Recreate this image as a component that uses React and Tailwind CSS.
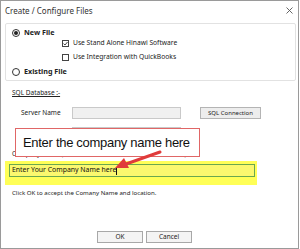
import React from "react";

const ui = { fontFamily: '"Noto Sans", "Open Sans", sans-serif' };

function Radio({ checked }) {
  return (
    <span className="w-[8px] h-[8px] rounded-full border border-[#333] bg-white flex items-center justify-center shrink-0">
      {checked && <span className="w-[4px] h-[4px] rounded-full bg-[#222]" />}
    </span>
  );
}

function Check({ checked }) {
  return (
    <span className="w-[7px] h-[7px] border border-[#444] bg-white flex items-center justify-center shrink-0">
      {checked && (
        <svg width="5" height="5" viewBox="0 0 5 5">
          <path d="M0.5 2.6 L2 4 L4.5 1" fill="none" stroke="#333" strokeWidth="0.9" />
        </svg>
      )}
    </span>
  );
}

export default function App() {
  return (
    <div className="w-[300px] h-[249px] bg-white relative overflow-hidden text-[#222]" style={ui}>
      <div className="w-[299px] h-[249px] border border-[#9a9a9a] flex flex-col bg-white">
        {/* Title bar */}
        <div className="h-[22px] flex items-center justify-between pl-[4px] pr-[5px] pb-[3px]">
          <span className="text-[8px] leading-none text-[#333]">Create / Configure Files</span>
          <svg width="7" height="7" viewBox="0 0 7 7">
            <path d="M0.5 0.5 L6.5 6.5 M6.5 0.5 L0.5 6.5" stroke="#555" strokeWidth="0.9" />
          </svg>
        </div>

        {/* Group box */}
        <div className="ml-[4px] w-[291px] h-[58px] border border-[#e2e2e2] rounded-[2px] pt-[4px] flex flex-col">
          <div className="h-[10px] flex items-center pl-[6px] gap-[4px]">
            <Radio checked />
            <span className="text-[7.2px] font-bold leading-none">New File</span>
          </div>
          <div className="h-[10px] flex items-center pl-[56px] gap-[4px]">
            <Check checked />
            <span className="text-[6.7px] leading-none">Use Stand Alone Hinawi Software</span>
          </div>
          <div className="h-[10px] mt-[4px] flex items-center pl-[56px] gap-[4px]">
            <Check />
            <span className="text-[6.7px] leading-none">Use Integration with QuickBooks</span>
          </div>
          <div className="h-[10px] mt-[5px] flex items-center pl-[6px] gap-[4px]">
            <Radio />
            <span className="text-[7.2px] font-bold leading-none">Existing File</span>
          </div>
        </div>

        {/* SQL Database */}
        <div className="h-[10px] mt-[7px] ml-[11px] flex items-center">
          <span className="text-[6.5px] leading-none underline">SQL Database :-</span>
        </div>

        {/* Server row */}
        <div className="h-[12px] mt-[9px] flex items-center">
          <span className="ml-[20px] w-[51px] text-[6.5px] leading-none">Server Name</span>
          <div className="w-[109px] h-[12px] bg-[#f0f0f0] border border-[#c9c9c9]" />
          <div className="ml-[19px] w-[61px] h-[12px] bg-[#ededed] border border-[#b4b4b4] flex items-center justify-center">
            <span className="text-[6px] leading-none">SQL Connection</span>
          </div>
        </div>

        {/* second input */}
        <div className="h-[12px] mt-[8px] ml-[71px] w-[109px] bg-[#f0f0f0] border border-[#c9c9c9]" />

        {/* Company label */}
        <div className="h-[10px] mt-[10px] ml-[11px] flex items-center">
          <span className="text-[6.3px] leading-none whitespace-nowrap">
            Company Name (The name will be used as database name)
          </span>
        </div>

        {/* Yellow highlight */}
        <div className="ml-[4px] mt-[2px] w-[252px] h-[24px] bg-[#ffff57] pt-[3px] pl-[4px]">
          <div className="w-[246px] h-[13px] border border-[#6aa84f] bg-[#fbf86e] flex items-center pl-[2px]">
            <span className="text-[6.9px] leading-none text-[#111]">Enter Your Company Name here</span>
            <span className="w-px h-[8px] bg-[#111]" />
          </div>
        </div>

        {/* Click OK text */}
        <div className="h-[10px] mt-[3px] ml-[11px] flex items-center">
          <span className="text-[6.1px] leading-none whitespace-nowrap">Click OK to accept the Comany Name and location.</span>
        </div>

        {/* Buttons */}
        <div className="mt-[33px] ml-[96px] flex gap-[3px]">
          <div className="w-[46px] h-[12px] border border-[#a8a8a8] bg-[#f4f4f4] flex items-center justify-center">
            <span className="text-[6.5px] leading-none">OK</span>
          </div>
          <div className="w-[46px] h-[12px] border border-[#a8a8a8] bg-[#f4f4f4] flex items-center justify-center">
            <span className="text-[6.5px] leading-none">Cancel</span>
          </div>
        </div>
      </div>

      {/* Annotation box */}
      <div
        className="absolute left-[15px] top-[128px] w-[185px] h-[29px] bg-white border border-[#e06666] flex items-center pl-[7px]"
        style={{ fontFamily: '"Liberation Sans", Arial, sans-serif' }}
      >
        <span className="text-[13px] tracking-[-0.3px] leading-none whitespace-nowrap text-[#111]">
          Enter the company name here
        </span>
      </div>

      {/* Arrow */}
      <svg className="absolute left-0 top-0" width="300" height="249" viewBox="0 0 300 249">
        <path d="M160 152 L126 164" stroke="#e03b3b" strokeWidth="3" strokeLinecap="round" />
        <path d="M115 168 L124 158 L129 168 Z" fill="#e03b3b" />
      </svg>
    </div>
  );
}
